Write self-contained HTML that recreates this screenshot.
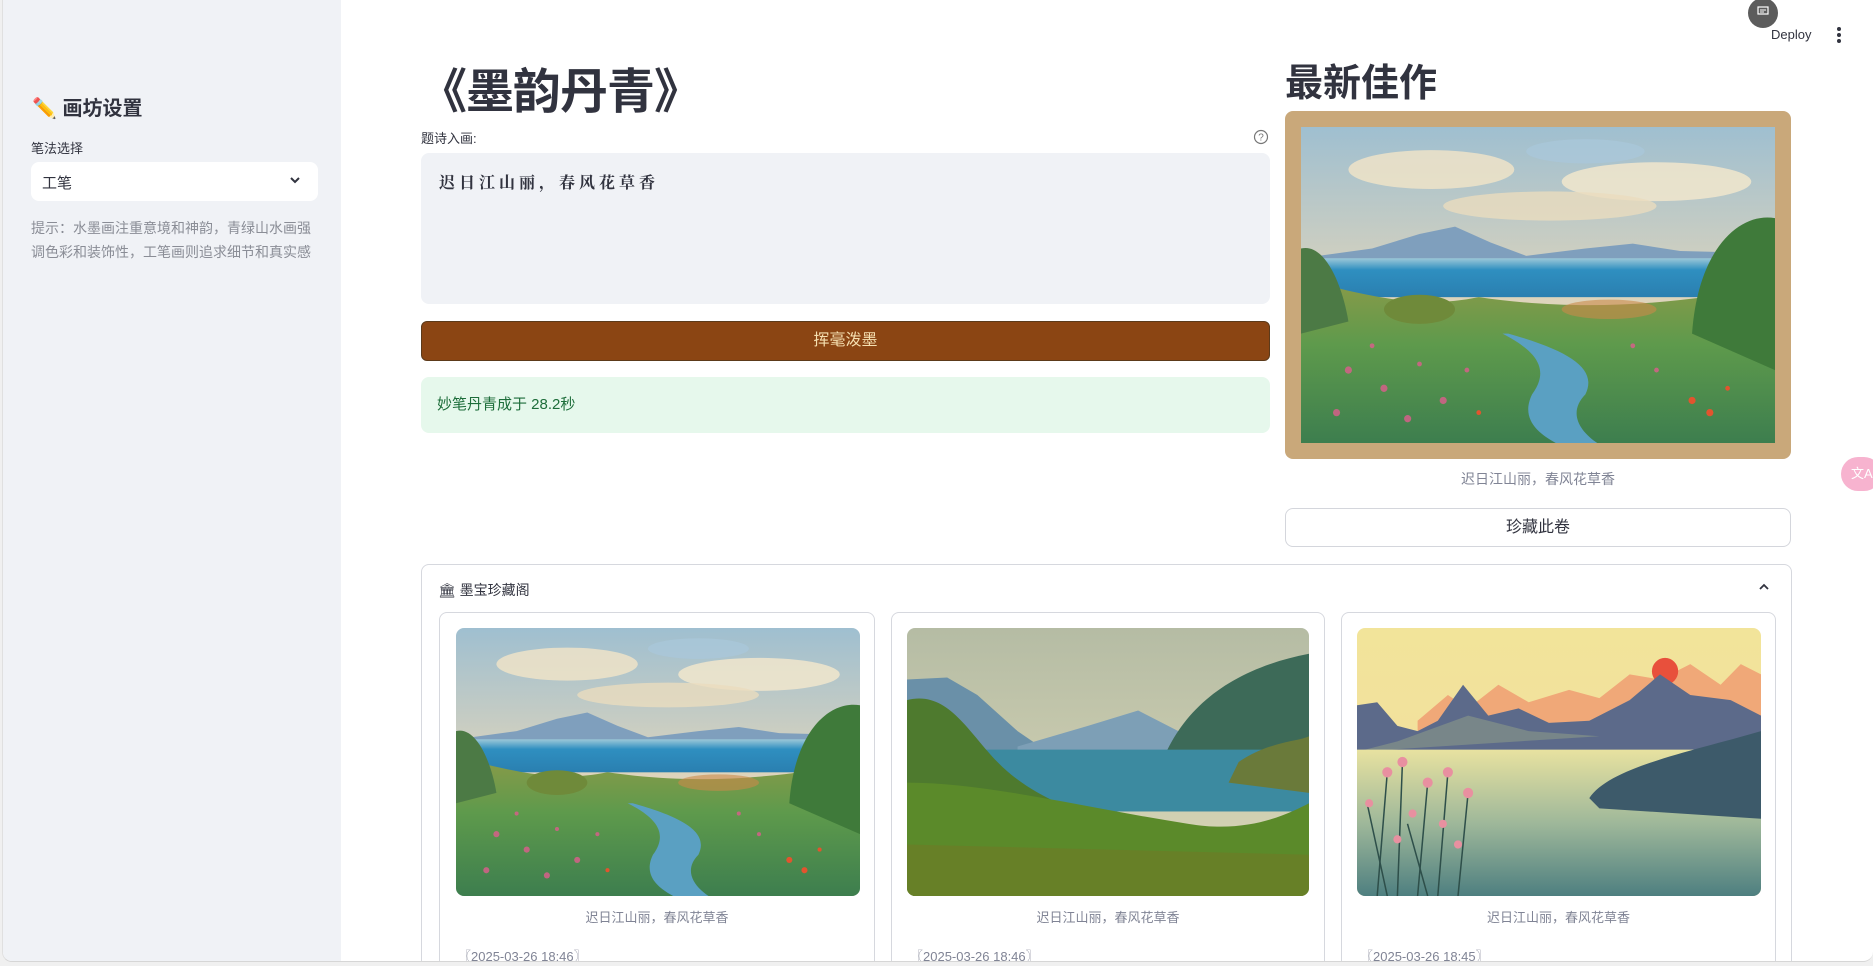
<!DOCTYPE html>
<html><head><meta charset="utf-8"><style>
*{box-sizing:border-box;margin:0;padding:0}
body{width:1873px;height:966px;overflow:hidden;background:#f0f0f0;font-family:"Liberation Sans","Noto Sans CJK SC",sans-serif;color:#31333f;position:relative}
.frame{position:absolute;left:2px;top:0;width:1871px;height:962px;background:#fff;border-radius:0 0 10px 10px;border-bottom:1px solid #d6d6d6;border-left:1px solid #e0e0e0;overflow:hidden}
.side{position:absolute;left:0;top:0;width:338px;height:962px;background:#f0f2f6}
.abs{position:absolute}
svg.p{display:block;width:100%;height:100%}
</style></head><body>
<svg width="0" height="0" style="position:absolute">
<defs>
<linearGradient id="sky1" x1="0" y1="0" x2="0" y2="1"><stop offset="0" stop-color="#9fbfd0"/><stop offset=".6" stop-color="#e3d6ba"/><stop offset="1" stop-color="#c8d0c8"/></linearGradient>
<linearGradient id="lake1" x1="0" y1="0" x2="0" y2="1"><stop offset="0" stop-color="#9cc8d8"/><stop offset=".3" stop-color="#2f8fc0"/><stop offset="1" stop-color="#2a7fb0"/></linearGradient>
<linearGradient id="mead" x1="0" y1="0" x2="0" y2="1"><stop offset="0" stop-color="#8a9a48"/><stop offset=".4" stop-color="#5e9a4c"/><stop offset="1" stop-color="#3d7e4e"/></linearGradient>
<g id="pic1">
<rect width="400" height="260" fill="url(#sky1)"/>
<ellipse cx="110" cy="35" rx="70" ry="16" fill="#efe3c8" opacity=".85"/>
<ellipse cx="300" cy="45" rx="80" ry="16" fill="#f1e6cc" opacity=".85"/>
<ellipse cx="210" cy="65" rx="90" ry="12" fill="#eadcbe" opacity=".8"/>
<ellipse cx="240" cy="20" rx="50" ry="10" fill="#a9c8dc" opacity=".7"/>
<path d="M0 108 L60 100 L100 88 L130 82 L160 95 L190 106 L240 100 L280 96 L320 102 L400 104 L400 112 L0 112Z" fill="#7f9fbd"/>
<rect y="108" width="400" height="32" fill="url(#lake1)"/>
<path d="M0 125 C60 140 100 150 150 140 C220 150 300 150 400 130 L400 260 L0 260Z" fill="url(#mead)"/>
<path d="M330 170 C335 100 370 70 400 75 L400 200Z" fill="#3f7a3a"/>
<path d="M0 100 C20 95 35 130 40 160 L0 170Z" fill="#4c7a45"/>
<ellipse cx="100" cy="150" rx="30" ry="12" fill="#6f8a3a"/>
<ellipse cx="260" cy="150" rx="40" ry="8" fill="#c98a4a" opacity=".6"/>
<path d="M170 170 C200 185 210 200 195 220 C185 240 200 252 215 260 L250 260 C235 250 225 235 240 220 C250 200 230 185 175 170Z" fill="#5aa0c2"/>
<g fill="#d6608a" opacity=".85"><circle cx="40" cy="200" r="3"/><circle cx="70" cy="215" r="3"/><circle cx="100" cy="195" r="2"/><circle cx="120" cy="225" r="3"/><circle cx="60" cy="180" r="2"/><circle cx="140" cy="200" r="2"/><circle cx="300" cy="200" r="2"/><circle cx="30" cy="235" r="3"/><circle cx="90" cy="240" r="3"/><circle cx="280" cy="180" r="2"/></g>
<g fill="#e2542e"><circle cx="330" cy="225" r="3"/><circle cx="345" cy="235" r="3"/><circle cx="360" cy="215" r="2"/><circle cx="150" cy="235" r="2"/></g>
</g>
<linearGradient id="sky2" x1="0" y1="0" x2="0" y2="1"><stop offset="0" stop-color="#b5bca4"/><stop offset="1" stop-color="#dcd8b8"/></linearGradient>
<g id="pic2">
<rect width="400" height="260" fill="url(#sky2)"/>
<path d="M0 50 L40 48 L70 65 L110 100 L140 120 L0 120Z" fill="#6a90a8"/>
<path d="M110 115 L180 95 L230 80 L270 100 L280 130 L110 130Z" fill="#7d9fb6"/>
<path d="M250 140 C270 80 320 40 400 25 L400 150Z" fill="#3d6a58"/>
<rect y="118" width="400" height="60" fill="#3c8aa0"/>
<path d="M330 130 C360 110 390 110 400 105 L400 160 L320 150Z" fill="#6a7a3a"/>
<path d="M0 70 C40 60 60 100 90 130 C110 150 130 160 150 170 L170 260 L0 260Z" fill="#4e7a2e"/>
<path d="M0 150 C80 150 180 175 280 190 C340 200 380 180 400 170 L400 260 L0 260Z" fill="#5b8a2a"/>
<path d="M0 210 L400 220 L400 260 L0 260Z" fill="#6f7a26" opacity=".6"/>
</g>
<linearGradient id="sky3" x1="0" y1="0" x2="0" y2="1"><stop offset="0" stop-color="#f2e49a"/><stop offset="1" stop-color="#f2dca0"/></linearGradient>
<linearGradient id="lake3" x1="0" y1="0" x2="0" y2="1"><stop offset="0" stop-color="#e8e2a0"/><stop offset=".5" stop-color="#9fb89a"/><stop offset="1" stop-color="#4e7f80"/></linearGradient>
<g id="pic3">
<rect width="400" height="260" fill="url(#sky3)"/>
<path d="M60 90 L90 65 L110 78 L140 55 L170 72 L210 60 L240 68 L270 45 L300 50 L330 35 L360 55 L380 35 L400 45 L400 100 L60 100Z" fill="#f0a878"/>
<circle cx="305" cy="42" r="13" fill="#e8503c"/>
<path d="M0 75 L20 72 L40 95 L60 100 L80 90 L105 55 L130 85 L160 78 L190 92 L230 90 L270 70 L300 45 L330 65 L370 70 L400 85 L400 120 L0 120Z" fill="#5c6a8a"/>
<path d="M40 110 L110 85 L170 100 L240 105 L0 120Z" fill="#8a9a88" opacity=".6"/>
<rect y="118" width="400" height="142" fill="url(#lake3)"/>
<path d="M230 165 C250 135 330 120 400 100 L400 185 L240 175Z" fill="#3d5a6a"/>
<g stroke="#2e4f4a" stroke-width="1.5" fill="none"><path d="M20 260 L30 140"/><path d="M40 260 L45 130"/><path d="M60 260 L70 150"/><path d="M80 260 L90 140"/><path d="M100 260 L110 160"/><path d="M30 260 L10 170"/><path d="M70 260 L50 190"/></g>
<g fill="#e890a0"><circle cx="30" cy="140" r="5"/><circle cx="45" cy="130" r="5"/><circle cx="70" cy="150" r="5"/><circle cx="90" cy="140" r="5"/><circle cx="110" cy="160" r="5"/><circle cx="12" cy="170" r="4"/><circle cx="55" cy="180" r="4"/><circle cx="85" cy="190" r="4"/><circle cx="40" cy="205" r="4"/><circle cx="100" cy="210" r="4"/></g>
</g>
</defs></svg>
<div class="frame">
<div class="side">
<div class="abs" style="left:29px;top:92px;font-size:20px;font-weight:bold;color:#31333f">✏️ 画坊设置</div>
<div class="abs" style="left:28px;top:138px;font-size:13px">笔法选择</div>
<div class="abs" style="left:28px;top:162px;width:287px;height:39px;background:#fff;border-radius:8px">
<span class="abs" style="left:11px;top:10px;font-size:15px">工笔</span>
<svg class="abs" style="left:258px;top:14px" width="12" height="10" viewBox="0 0 12 10"><path d="M2 2 L6 6 L10 2" stroke="#31333f" stroke-width="2" fill="none"/></svg>
</div>
<div class="abs" style="left:28px;top:216px;width:286px;font-size:14px;line-height:24px;color:#8a8d96">提示：水墨画注重意境和神韵，青绿山水画强调色彩和装饰性，工笔画则追求细节和真实感</div>
</div>

<div class="abs" style="left:1745px;top:-2px;width:30px;height:30px;border-radius:50%;background:#5c5c5c"><svg style="margin:8px 0 0 9px" width="12" height="11" viewBox="0 0 12 11"><rect x="1" y="1" width="10" height="7" fill="none" stroke="#fff" stroke-width="1.2"/><path d="M3 4h6M3 6h4" stroke="#fff"/></svg></div>
<div class="abs" style="left:1768px;top:27px;font-size:13px;color:#31333f">Deploy</div>
<div class="abs" style="left:1834px;top:27px;width:4px"><div style="width:4px;height:4px;border-radius:2px;background:#31333f;margin-bottom:2px"></div><div style="width:4px;height:4px;border-radius:2px;background:#31333f;margin-bottom:2px"></div><div style="width:4px;height:4px;border-radius:2px;background:#31333f"></div></div>

<div class="abs" style="left:416px;top:52px;font-size:48px;font-weight:bold;color:#31333f;letter-spacing:-1px">《墨韵丹青》</div>
<div class="abs" style="left:418px;top:128px;font-size:13px">题诗入画:</div>
<svg class="abs" style="left:1250px;top:129px" width="16" height="16" viewBox="0 0 16 16"><circle cx="8" cy="8" r="6.5" fill="none" stroke="#777" stroke-width="1.2"/><text x="8" y="11.5" font-size="10" text-anchor="middle" fill="#777" font-family="Liberation Sans">?</text></svg>
<div class="abs" style="left:418px;top:153px;width:849px;height:151px;background:#f0f2f6;border-radius:8px">
<div style="padding:17px 18px;font-family:'Liberation Serif','Noto Serif CJK SC',serif;font-size:16px;font-weight:bold;letter-spacing:4px">迟日江山丽，春风花草香</div>
</div>
<div class="abs" style="left:418px;top:321px;width:849px;height:40px;background:#8b4513;border:1px solid #5c3a1a;border-radius:6px;color:#f5dfb0;font-size:16px;text-align:center;line-height:38px">挥毫泼墨</div>
<div class="abs" style="left:418px;top:377px;width:849px;height:56px;background:#e6f8ec;border-radius:8px;color:#1d6d3a;font-size:15px;line-height:56px;padding-left:16px">妙笔丹青成于 28.2秒</div>

<div class="abs" style="left:1282px;top:52px;font-size:38px;font-weight:bold;color:#31333f">最新佳作</div>
<div class="abs" style="left:1282px;top:111px;width:506px;height:348px;background:#c9a87a;border-radius:8px;padding:16px">
<svg class="p" viewBox="0 0 400 260" preserveAspectRatio="none"><use href="#pic1"/></svg></div>
<div class="abs" style="left:1282px;top:469px;width:506px;text-align:center;font-size:14px;color:#808495">迟日江山丽，春风花草香</div>
<div class="abs" style="left:1282px;top:508px;width:506px;height:39px;border:1px solid #d4d6dc;border-radius:8px;text-align:center;line-height:37px;font-size:16px">珍藏此卷</div>
<div class="abs" style="left:1838px;top:457px;width:40px;height:34px;border-radius:17px;background:#f7b3cf;color:#fff;font-size:13px;line-height:34px;padding-left:10px">文A</div>

<div class="abs" style="left:418px;top:564px;width:1371px;height:420px;border:1px solid #d6d8de;border-radius:8px">
<div class="abs" style="left:16px;top:15px;font-size:14px">🏛 墨宝珍藏阁</div>
<svg class="abs" style="left:1336px;top:17px" width="12" height="10" viewBox="0 0 12 10"><path d="M2 7 L6 3 L10 7" stroke="#31333f" stroke-width="1.8" fill="none"/></svg>
</div>

<div class="abs" style="left:436px;top:612px;width:436px;height:360px;border:1px solid #d6d8de;border-radius:8px">
<div class="abs" style="left:16px;top:15px;width:404px;height:268px;border-radius:8px;overflow:hidden"><svg class="p" viewBox="0 0 400 260" preserveAspectRatio="none"><use href="#pic1"/></svg></div>
<div class="abs" style="left:0;top:294px;width:434px;text-align:center;font-size:13px;color:#808495">迟日江山丽，春风花草香</div>
<div class="abs" style="left:18px;top:333px;font-size:13px;color:#808495">〖2025-03-26 18:46〗</div>
</div>
<div class="abs" style="left:888px;top:612px;width:434px;height:360px;border:1px solid #d6d8de;border-radius:8px">
<div class="abs" style="left:15px;top:15px;width:402px;height:268px;border-radius:8px;overflow:hidden"><svg class="p" viewBox="0 0 400 260" preserveAspectRatio="none"><use href="#pic2"/></svg></div>
<div class="abs" style="left:0;top:294px;width:432px;text-align:center;font-size:13px;color:#808495">迟日江山丽，春风花草香</div>
<div class="abs" style="left:18px;top:333px;font-size:13px;color:#808495">〖2025-03-26 18:46〗</div>
</div>
<div class="abs" style="left:1338px;top:612px;width:435px;height:360px;border:1px solid #d6d8de;border-radius:8px">
<div class="abs" style="left:15px;top:15px;width:404px;height:268px;border-radius:8px;overflow:hidden"><svg class="p" viewBox="0 0 400 260" preserveAspectRatio="none"><use href="#pic3"/></svg></div>
<div class="abs" style="left:0;top:294px;width:433px;text-align:center;font-size:13px;color:#808495">迟日江山丽，春风花草香</div>
<div class="abs" style="left:18px;top:333px;font-size:13px;color:#808495">〖2025-03-26 18:45〗</div>
</div>
</div>
</body></html>
